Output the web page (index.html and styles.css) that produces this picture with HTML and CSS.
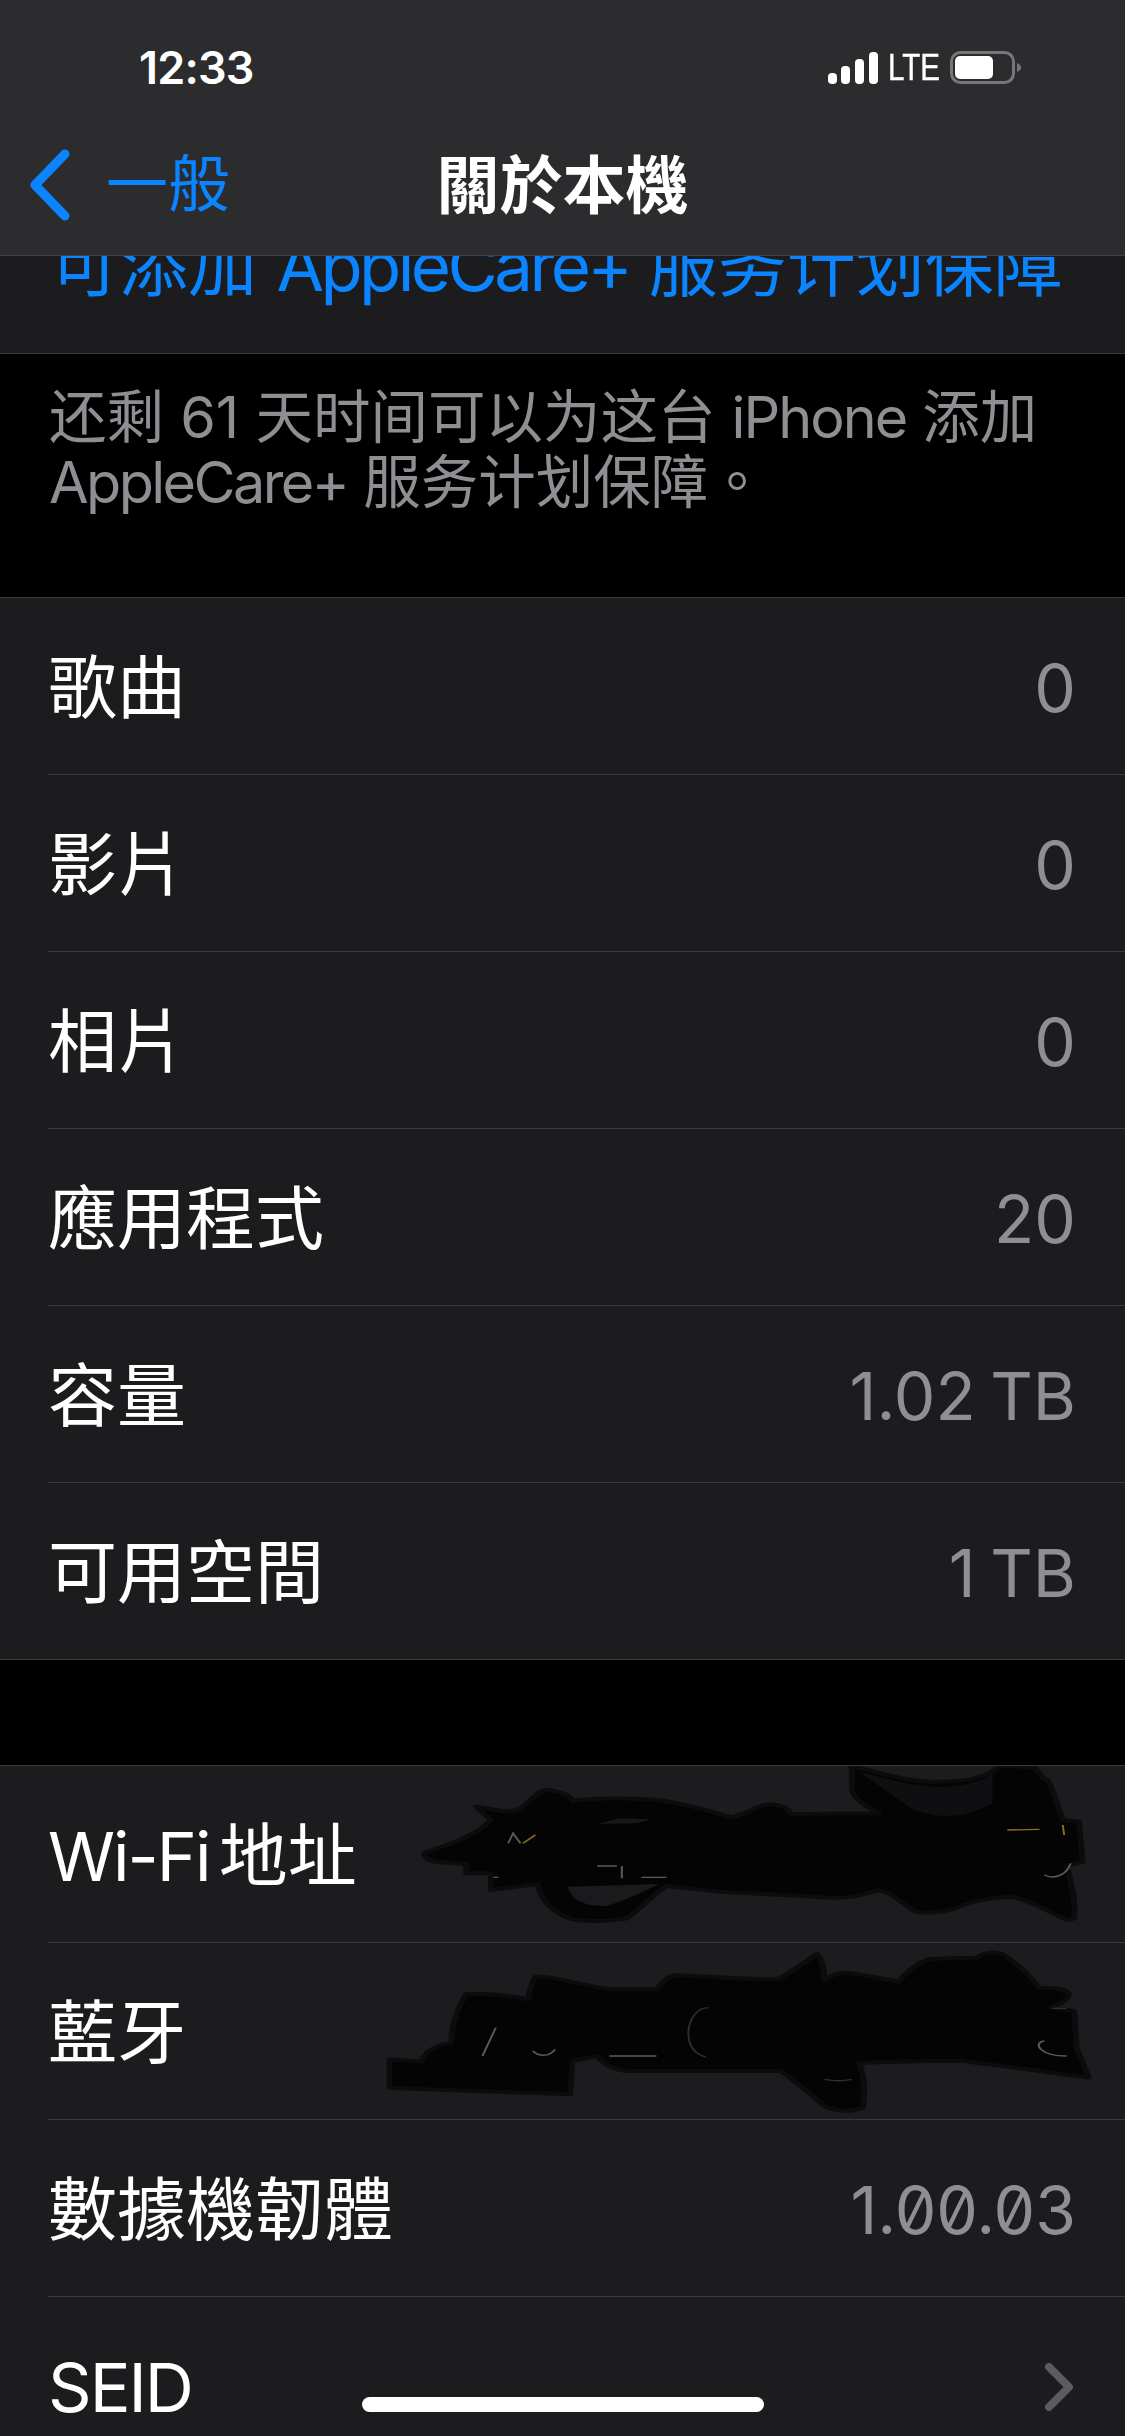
FILE: index.html
```html
<!DOCTYPE html>
<html lang="zh-Hant">
<head>
<meta charset="utf-8">
<title>關於本機</title>
<link rel="stylesheet" href="styles.css">
</head>
<body>
<div class="phone">
  <header class="nav">
    <div class="status">
      <span class="time">12:33</span>
      <div class="indicators">
        <svg class="signal" viewBox="0 0 50 32" width="50" height="32"><rect x="0" y="21" width="9" height="11" rx="4" fill="#fff"/><rect x="13" y="14" width="9" height="18" rx="4" fill="#fff"/><rect x="27" y="7" width="9" height="25" rx="4" fill="#fff"/><rect x="41" y="0" width="9" height="32" rx="4" fill="#fff"/></svg>
        <span class="lte">LTE</span>
        <svg class="battery" viewBox="0 0 71 33" width="71" height="33"><rect x="1.5" y="1.5" width="62" height="30" rx="9" fill="none" stroke="#77777a" stroke-width="3"/><rect x="5" y="5" width="38" height="23" rx="5" fill="#fff"/><path d="M67 12c3 1 4 3 4 4.500s-1 3.500-4 4.500z" fill="#77777a"/></svg>
      </div>
    </div>
    <div class="bar">
      <div class="back">
        <svg class="back-icon" viewBox="0 0 48 76" width="48" height="76"><path d="M35 7 5 38l30 31" fill="none" stroke="#0a84ff" stroke-width="9" stroke-linecap="round" stroke-linejoin="round"/></svg>
        <span class="back-label">一般</span>
      </div>
      <h1 class="title">關於本機</h1>
      <span></span>
    </div>
  </header>

  <main class="content">
    <div class="link-row"><span class="link" lang="zh-Hans">可添加 <span class="tight-lg">AppleCare+</span> 服务计划保障</span></div>
    <p class="note" lang="zh-Hans">还剩 61 天时间可以为这台 <span class="tight-sm">iPhone</span> 添加<br><span class="tight-md">AppleCare+</span> 服务计划保障<span lang="zh-Hant">。</span></p>

    <section class="group">
      <div class="row"><span class="label">歌曲</span><span class="value">0</span></div>
      <div class="row"><span class="label">影片</span><span class="value">0</span></div>
      <div class="row"><span class="label">相片</span><span class="value">0</span></div>
      <div class="row"><span class="label">應用程式</span><span class="value">20</span></div>
      <div class="row"><span class="label">容量</span><span class="value">1.02 TB</span></div>
      <div class="row"><span class="label">可用空間</span><span class="value">1 TB</span></div>
    </section>

    <div class="gap"></div>

    <section class="group">
      <div class="row"><span class="label"><span class="latin">Wi-Fi</span> 地址</span>
        <svg class="scribble" viewBox="0 78 1568 528" preserveAspectRatio="none">
          <path class="ink" d="M150 340C190 315 250 295 285 240L255 200C285 205 320 225 345 205 365 185 380 150 400 150 425 155 445 165 450 182 490 175 570 172 625 180 690 195 730 215 770 232 800 225 830 190 855 193 880 197 888 210 892 222L1070 220C1040 195 1018 175 1016 150L1015 80C1060 90 1130 130 1190 125 1240 125 1290 115 1315 78L1385 82C1400 110 1408 125 1412 120 1425 160 1435 210 1442 240L1475 245 1482 365 1450 378C1460 430 1470 490 1465 535L1450 540C1410 510 1370 480 1340 470 1300 470 1260 485 1240 495 1210 520 1170 520 1145 515 1120 495 1100 460 1070 450 1040 465 1000 478 960 472L750 455 640 438C610 470 580 515 560 535 520 545 480 545 450 538 410 520 385 480 380 432L285 450 285 400 235 400 235 372 170 365C155 360 150 350 150 340Z"/>
          <path class="hole" d="M500 252 545 235 610 238 580 250Z"/>
          <path class="hole-bg" d="M440 440C450 480 470 498 520 498 560 480 600 450 625 432Z"/>
          <path class="dimfill" d="M1030 95C1080 110 1130 140 1190 140 1240 140 1280 125 1300 100L1300 190C1270 215 1230 232 1200 228 1170 225 1140 210 1130 200Z"/>
          <path class="glint" d="M320 310 330 280 345 310"/>
          <path class="gold" d="M350 310 375 285"/>
          <path class="gold" d="M1330 270 1395 268M1442 255 1445 285"/>
          <path class="glint" d="M290 412H300M500 378H540M550 378V415M590 412H640"/>
          <path class="glint" d="M1405 405C1425 420 1450 405 1458 370"/>
        </svg>
      </div>
      <div class="row"><span class="label">藍牙</span>
        <svg class="scribble" viewBox="0 606 1568 528" preserveAspectRatio="none">
          <path class="ink" d="M80 955 145 962C150 935 170 915 205 905 205 870 210 820 235 760 280 755 330 765 360 775 365 745 368 720 375 708 400 700 470 735 530 745L620 745C630 725 640 710 655 703 720 705 800 715 865 715 900 690 925 655 945 640 958 660 960 690 960 717 975 700 990 695 1005 695 1040 700 1085 715 1110 722 1125 690 1150 665 1170 655 1210 650 1250 650 1270 650 1280 635 1300 630 1320 640 1350 665 1375 705 1395 740 1420 740 1450 742 1455 760 1450 780 1435 790 1420 800L1465 810 1470 920 1495 1010 1370 985 1240 960 1170 960 1030 965C1042 1010 1042 1060 1038 1100 1020 1112 990 1112 965 1100 930 1060 900 1015 870 990L560 990C530 985 510 965 500 945L450 960 445 1060 250 1050 80 1040Z"/>
          <path class="glint" d="M268 945 295 860"/>
          <path class="glint" d="M370 930C385 950 405 945 415 925"/>
          <path class="glint" d="M525 945H620"/>
          <path class="dim" d="M725 800C680 800 665 930 720 948"/>
          <path class="glint" d="M1450 945C1395 945 1380 905 1405 900"/>
          <path class="dim" d="M1420 802H1450"/>
          <path class="dim" d="M960 1015C985 1022 1000 1020 1015 1015"/>
        </svg>
      </div>
      <div class="row"><span class="label">數據機韌體</span><span class="value zero">1.00.03</span></div>
      <div class="row"><span class="label"><span class="latin">SEID</span></span>
        <svg class="chevron" viewBox="0 0 30 48" width="30" height="48"><path d="M5 4 25 24 5 44" fill="none" stroke="#5b5b60" stroke-width="8" stroke-linecap="round" stroke-linejoin="round"/></svg>
      </div>
    </section>
  </main>

  <div class="home"></div>
</div>
</body>
</html>
```

FILE: styles.css
```css
* { box-sizing: border-box; }

html, body {
  margin: 0;
  padding: 0;
  background: #000;
}

body {
  width: 1125px;
  height: 2436px;
  overflow: hidden;
  font-family: Inter, "Noto Sans CJK TC", sans-serif;
  color: #fff;
}

.phone {
  position: relative;
  width: 1125px;
  height: 2436px;
  overflow: hidden;
  display: flex;
  flex-direction: column;
}

.nav {
  flex: none;
  height: 256px;
  background: #2c2c2e;
  border-bottom: 1px solid #424244;
  display: flex;
  flex-direction: column;
}

.status {
  height: 135px;
  padding: 0 104px 0 139px;
  display: flex;
  align-items: center;
  justify-content: space-between;
}

.time {
  font-size: 45px;
  font-weight: 600;
  letter-spacing: -0.8px;
}

.indicators {
  display: flex;
  align-items: center;
}

.signal { display: block; }

.lte {
  margin: 0 -1px 0 10px;
  font-family: "Liberation Sans", sans-serif;
  font-size: 36px;
  line-height: 32px;
  transform: scaleX(0.82);
  transform-origin: left center;
  -webkit-text-stroke: 0.4px #fff;
}

.battery { display: block; }

.bar {
  height: 100px;
  padding-left: 30px;
  display: grid;
  grid-template-columns: 1fr auto 1fr;
  align-items: center;
}

.back {
  display: flex;
  align-items: center;
}

.back-icon {
  display: block;
  flex: none;
  margin-right: 28px;
}

.back-label {
  font-size: 62px;
  line-height: 76px;
  color: #0a84ff;
}

.title {
  margin: 0 0 0 -30px;
  font-size: 63px;
  font-weight: 700;
  line-height: 76px;
}

.content {
  flex: 1;
  min-height: 0;
}

.link-row {
  height: 98px;
  background: #1c1c1e;
  border-bottom: 1px solid #3a3a3c;
  padding-left: 50px;
  overflow: hidden;
  display: flex;
  align-items: flex-end;
  white-space: nowrap;
}

.link {
  font-size: 69px;
  line-height: 80px;
  margin-bottom: 47px;
  color: #0a84ff;
}

.tight-lg { letter-spacing: -3.6px; }
.tight-sm { letter-spacing: -2px; }
.tight-md { letter-spacing: -2.6px; }

.note {
  margin: 0;
  height: 243px;
  padding: 31px 49px 0;
  font-size: 57.5px;
  line-height: 65px;
  color: #8e8e93;
  white-space: nowrap;
}

.group {
  background: #1c1c1e;
  border-top: 1px solid #3a3a3c;
  border-bottom: 1px solid #3a3a3c;
}

.row {
  position: relative;
  height: 177px;
  margin-left: 48px;
  padding: 4px 49px 0 0;
  border-bottom: 1px solid #3a3a3c;
  display: flex;
  align-items: center;
  justify-content: space-between;
}

.row:last-child { border-bottom: 0; height: 176px; }

.label {
  font-size: 69px;
  line-height: 80px;
  white-space: nowrap;
}

.latin {
  font-size: 68px;
  letter-spacing: -2px;
  word-spacing: -7px;
  margin-right: -10px;
}

.value {
  font-size: 66px;
  line-height: 80px;
  word-spacing: -4px;
  color: #8e8e93;
  white-space: nowrap;
}

.zero { font-feature-settings: "zero" 1; }

.chevron { display: block; margin-right: 2px; }

.gap { height: 105px; }

.scribble {
  position: absolute;
  top: 0;
  right: 0;
  width: 775px;
  height: 176px;
}

.ink {
  fill: #040405;
  stroke: #0c0c0e;
  stroke-width: 12;
  stroke-linejoin: round;
  filter: blur(1.5px);
}

.hole { fill: #17171a; }
.hole-bg { fill: #1a1a1c; filter: blur(1px); }
.dimfill { fill: #0f0f11; filter: blur(1px); }
.glint, .gold, .dim { fill: none; stroke-width: 4; }
.glint { stroke: #5c5c5f; }
.dim { stroke: #2e2e30; }
.gold { stroke: #8a7020; }

.home {
  position: absolute;
  left: 362px;
  top: 2397px;
  width: 402px;
  height: 15px;
  border-radius: 8px;
  background: #fff;
}
```
